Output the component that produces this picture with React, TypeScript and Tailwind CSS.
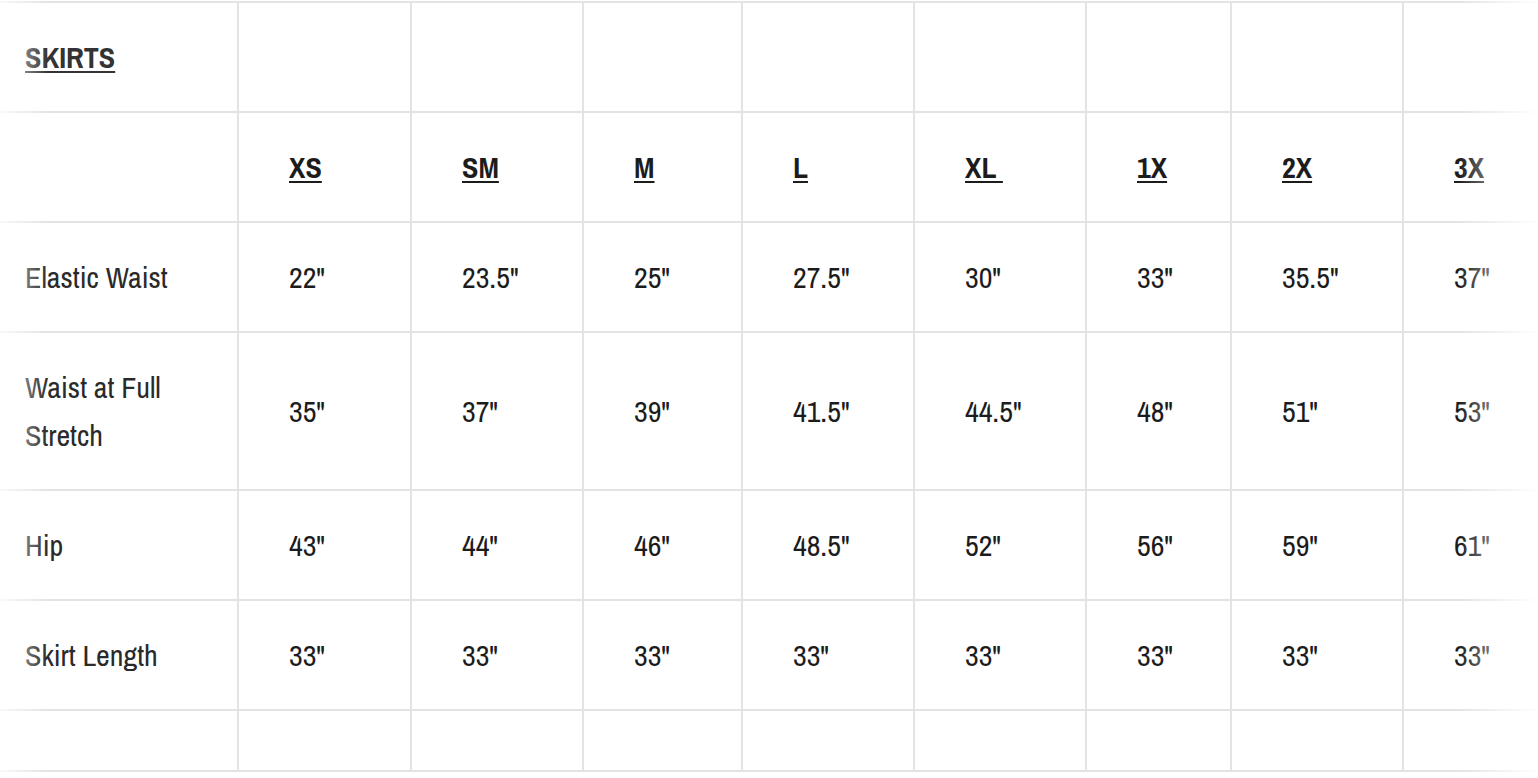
import React from "react";

const sizes = ["XS", "SM", "M", "L", "XL\u00a0", "1X", "2X", "3X"];
const rows: { label: React.ReactNode; values: string[]; h: string }[] = [
  { label: "Elastic Waist", values: ['22"', '23.5"', '25"', '27.5"', '30"', '33"', '35.5"', '37"'], h: "h-[110px]" },
  { label: <>Waist at Full<br />Stretch</>, values: ['35"', '37"', '39"', '41.5"', '44.5"', '48"', '51"', '53"'], h: "h-[158px]" },
  { label: "Hip", values: ['43"', '44"', '46"', '48.5"', '52"', '56"', '59"', '61"'], h: "h-[110px]" },
  { label: "Skirt Length", values: ['33"', '33"', '33"', '33"', '33"', '33"', '33"', '33"'], h: "h-[110px]" },
];

const colWidths = [238, 173, 172, 159, 172, 172, 145, 172, 172];

export default function App() {
  const cell = "border-2 border-[#e3e3e3] align-middle pl-[50px] pr-0 py-0";
  const first = "border-2 border-l-0 border-[#e3e3e3] align-middle pl-[25px] pr-0 py-0";
  return (
    <div
      className="relative w-[1538px] h-[778px] overflow-hidden bg-white text-[#1c1c1c] text-[30px] leading-[48px]"
      style={{ fontFamily: '"Archivo Narrow", "Roboto Condensed", "Liberation Sans Narrow", "DejaVu Sans Condensed", "Liberation Sans", sans-serif' }}
    >
      <table className="mt-px border-collapse table-fixed w-[1575px]">
        <colgroup>
          {colWidths.map((w, i) => (
            <col key={i} style={{ width: w }} />
          ))}
        </colgroup>
        <tbody>
          <tr className="h-[110px]">
            <td className={first}>
              <span className="font-bold underline decoration-2 underline-offset-[3px] text-[#333]">SKIRTS</span>
            </td>
            {sizes.map((_, i) => (
              <td key={i} className={cell}></td>
            ))}
          </tr>
          <tr className="h-[110px]">
            <td className={first}></td>
            {sizes.map((s) => (
              <td key={s} className={cell}>
                <span className="font-bold underline decoration-2 underline-offset-[3px] whitespace-pre">{s}</span>
              </td>
            ))}
          </tr>
          {rows.map((r, i) => (
            <tr key={i} className={r.h}>
              <td className={`${first} text-[#2a2a2a]`}>{r.label}</td>
              {r.values.map((v, j) => (
                <td key={j} className={`${cell} whitespace-nowrap`}>{v}</td>
              ))}
            </tr>
          ))}
          <tr className="h-[61px]">
            <td className={first}></td>
            {sizes.map((_, i) => (
              <td key={i} className={cell}></td>
            ))}
          </tr>
        </tbody>
      </table>
      <div className="pointer-events-none absolute left-0 top-0 h-full w-[48px] bg-gradient-to-r from-white/80 to-transparent" />
      <div className="pointer-events-none absolute right-0 top-0 h-full w-[80px] bg-gradient-to-l from-white to-transparent" />
    </div>
  );
}
